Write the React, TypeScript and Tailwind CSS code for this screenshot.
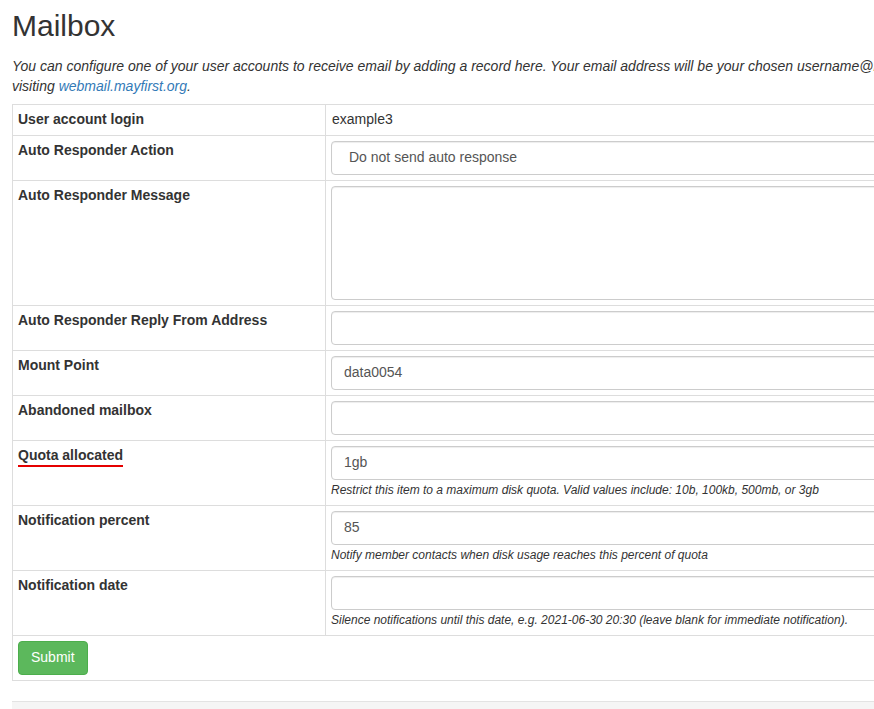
const inputCls =
  'block w-full h-[34px] rounded-[4px] border border-[#ccc] bg-white px-3 text-[14px] leading-[30px] text-[#555] shadow-[inset_0_1px_1px_rgba(0,0,0,0.075)]'

function Help({ children }: { children: React.ReactNode }) {
  return <div className="mt-[2px] pb-px text-[12px] leading-[17px] italic text-[#333]">{children}</div>
}

function Row({ label, children }: { label: React.ReactNode; children: React.ReactNode }) {
  return (
    <tr>
      <th className="border border-[#ddd] px-[5px] pt-[4px] pb-[6px] text-left align-top font-bold leading-[20px]">
        {label}
      </th>
      <td className="border border-[#ddd] p-[5px] align-top leading-[20px]">{children}</td>
    </tr>
  )
}

export default function App() {
  return (
    <div className="w-[874px] min-h-[709px] overflow-hidden bg-white font-['Liberation_Sans',Arial,sans-serif] text-[14px] text-[#333]">
      <div className="w-[1170px] px-3">
        <h1 className="pt-[9px] text-[30px] leading-[33px] font-normal">Mailbox</h1>
        <p className="mt-[14px] mb-2 italic leading-[20px]">
          You can configure one of your user accounts to receive email by adding a record here. Your email address will be your chosen username@mail.mayfirst.org and you can read it by
          <br />
          visiting <a className="text-[#337ab7]">webmail.mayfirst.org</a>.
        </p>
        <table className="w-full table-fixed border-collapse border border-[#ddd]">
          <colgroup>
            <col className="w-[313px]" />
            <col />
          </colgroup>
          <tbody>
            <Row label="User account login">
              <span className="-mt-px block pl-px">example3</span>
            </Row>
            <Row label="Auto Responder Action">
              <div className={inputCls + ' pl-[17px]'}>Do not send auto response</div>
            </Row>
            <Row label="Auto Responder Message">
              <div className={inputCls + ' h-[114px]'} />
            </Row>
            <Row label="Auto Responder Reply From Address">
              <div className={inputCls} />
            </Row>
            <Row label="Mount Point">
              <div className={inputCls}>data0054</div>
            </Row>
            <Row label="Abandoned mailbox">
              <div className={inputCls} />
            </Row>
            <Row
              label={
                <span className="inline-block border-b-2 border-[#e50000] leading-[19px]">Quota allocated</span>
              }
            >
              <div className={inputCls}>1gb</div>
              <Help>Restrict this item to a maximum disk quota. Valid values include: 10b, 100kb, 500mb, or 3gb</Help>
            </Row>
            <Row label="Notification percent">
              <div className={inputCls}>85</div>
              <Help>Notify member contacts when disk usage reaches this percent of quota</Help>
            </Row>
            <Row label="Notification date">
              <div className={inputCls} />
              <Help>Silence notifications until this date, e.g. 2021-06-30 20:30 (leave blank for immediate notification).</Help>
            </Row>
            <tr>
              <td colSpan={2} className="border border-[#ddd] p-[5px]">
                <button className="block h-[34px] rounded-[4px] border border-[#4cae4c] bg-[#5cb85c] px-3 pb-[2px] text-[14px] text-white">
                  Submit
                </button>
              </td>
            </tr>
          </tbody>
        </table>
        <div className="mt-[20px] h-[40px] border-t border-[#e3e3e3] bg-[#f5f5f5]" />
      </div>
    </div>
  )
}
